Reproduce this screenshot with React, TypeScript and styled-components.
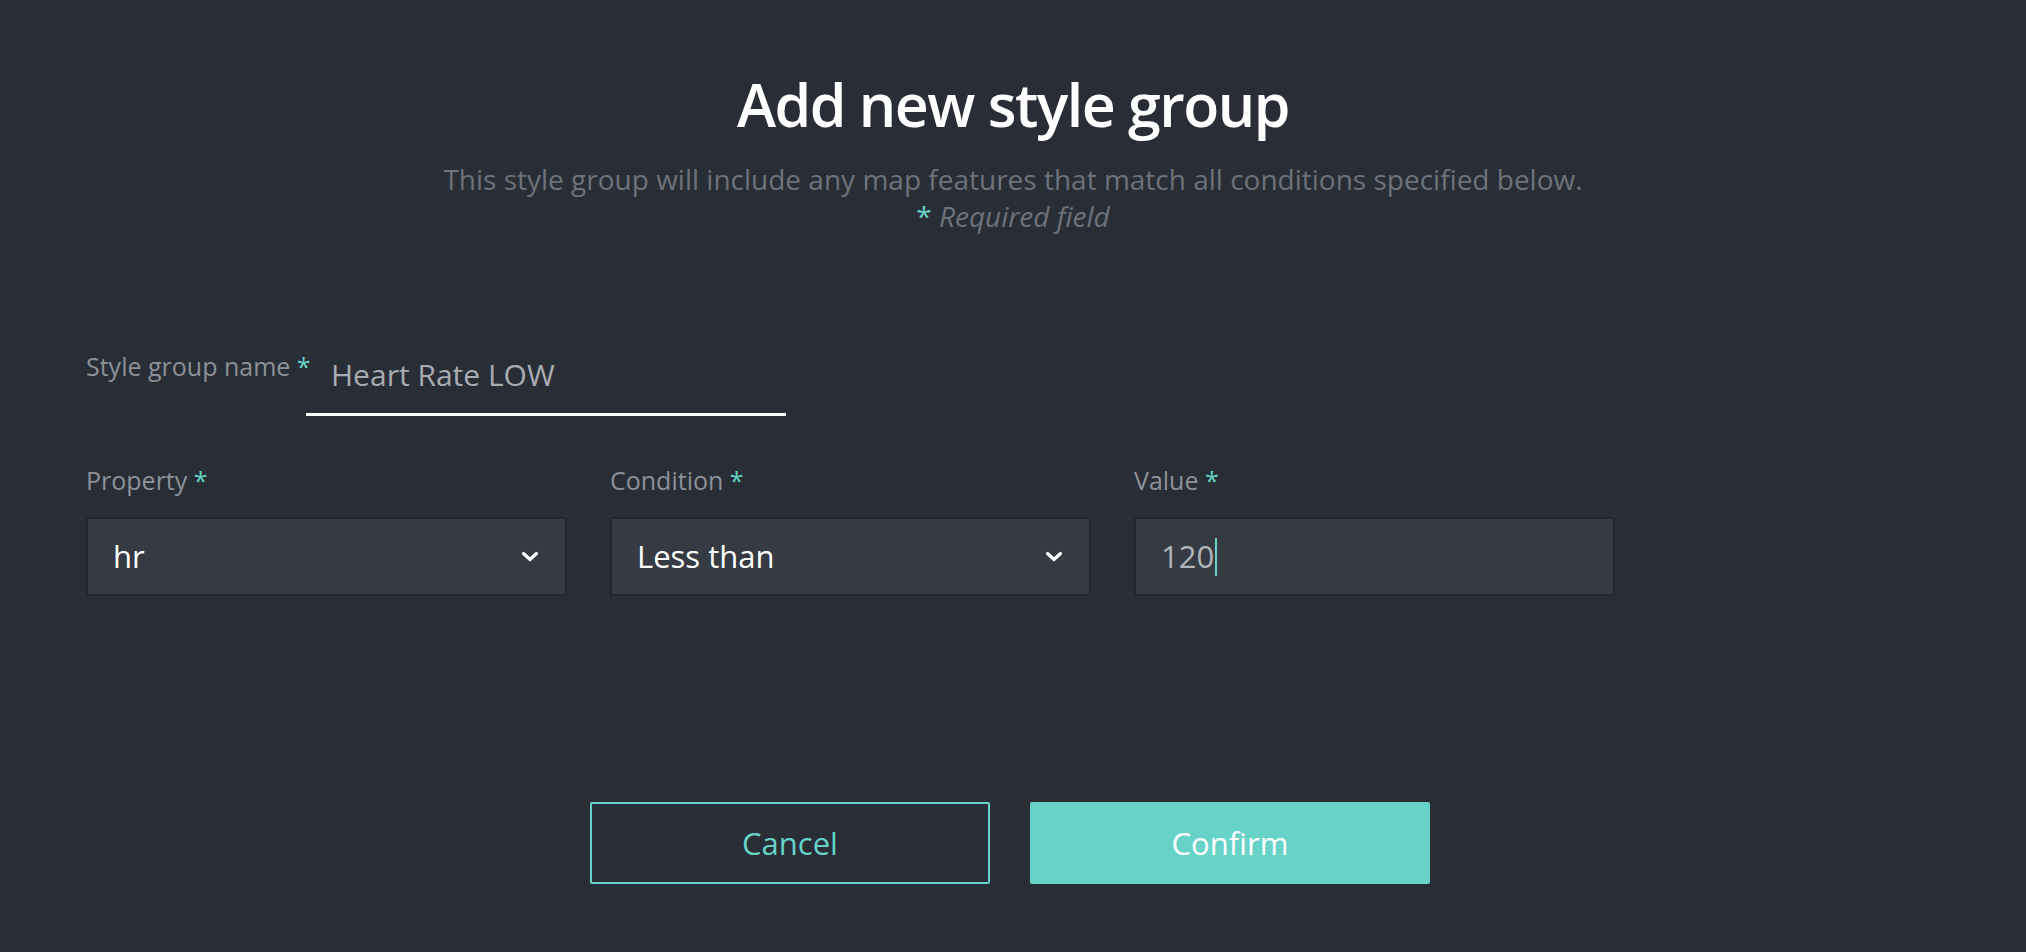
import React from 'react';
import styled, { createGlobalStyle } from 'styled-components';

const GlobalStyle = createGlobalStyle`
  html, body {
    margin: 0;
    padding: 0;
    background: #292d36;
  }
  body {
    font-family: "Open Sans", "Noto Sans", sans-serif;
  }
`;

const Page = styled.div`
  min-height: 100vh;
  box-sizing: border-box;
  padding-top: 75px;
  background: #292d36;
`;

const Header = styled.header`
  text-align: center;
`;

const Title = styled.h1`
  margin: 0;
  font-size: 59px;
  line-height: 1;
  font-weight: 600;
  color: #ffffff;
  letter-spacing: -1.5px;
`;

const Subtitle = styled.p`
  margin: 27px 0 0;
  font-size: 28px;
  line-height: 37px;
  color: #6e727b;
`;

const Required = styled.span`
  font-style: italic;
`;

const Star = styled.span`
  color: #67d3c8;
  font-style: normal;
`;

const Form = styled.div`
  padding: 0 86px;
  margin-top: 100px;
`;

const NameRow = styled.div`
  display: flex;
  align-items: flex-start;
`;

const Label = styled.label`
  font-size: 25px;
  line-height: 1;
  color: #8d9199;
  white-space: nowrap;
`;

const NameLabel = styled(Label)`
  flex: 0 0 220px;
  width: 220px;
  min-width: 0;
  margin-top: 19px;
`;

const NameInput = styled.input`
  flex: 0 0 480px;
  width: 480px;
  height: 81px;
  margin: 0;
  box-sizing: border-box;
  padding: 0 25px;
  border: none;
  border-bottom: 3px solid #ffffff;
  background: transparent;
  color: #a9acb2;
  font-family: inherit;
  font-size: 30px;
  outline: none;
`;

const FieldRow = styled.div`
  display: grid;
  grid-template-columns: repeat(3, 481px);
  column-gap: 43px;
  margin-top: 52px;
`;

const Field = styled.div`
  display: flex;
  flex-direction: column;
  gap: 24px;
`;

const Box = styled.div`
  height: 79px;
  box-sizing: border-box;
  display: flex;
  align-items: center;
  justify-content: space-between;
  padding: 0 26px 0 25px;
  background: #363a43;
  border: 2px solid #23262d;
  font-size: 31px;
  line-height: 1;
`;

const BoxText = styled.span<{ $muted?: boolean }>`
  color: ${(p) => (p.$muted ? '#b1b4b9' : '#ffffff')};
  display: flex;
  align-items: center;
`;

const Caret = styled.span`
  display: inline-block;
  width: 2px;
  height: 38px;
  margin-left: 1px;
  background: #67d3c8;
`;

const Buttons = styled.div`
  display: flex;
  justify-content: center;
  gap: 40px;
  margin-top: 206px;
  padding-right: 6px;
`;

const Button = styled.button<{ $primary?: boolean }>`
  width: 400px;
  height: 82px;
  box-sizing: border-box;
  border: 2px solid #67d3c8;
  border-radius: 2px;
  background: ${(p) => (p.$primary ? '#67d3c8' : 'transparent')};
  color: ${(p) => (p.$primary ? '#ffffff' : '#67d3c8')};
  font-family: inherit;
  font-size: 31px;
  cursor: pointer;
`;

function Chevron() {
  return (
    <svg width="18" height="11" viewBox="0 0 18 11">
      <polyline
        points="2.5,2.5 9,8.5 15.5,2.5"
        fill="none"
        stroke="#ffffff"
        strokeWidth="3.2"
        strokeLinecap="round"
        strokeLinejoin="round"
      />
    </svg>
  );
}

function App() {
  return (
    <Page>
      <GlobalStyle />
      <Header>
        <Title>Add new style group</Title>
        <Subtitle>
          This style group will include any map features that match all conditions specified below.
          <br />
          <Required>
            <Star>*</Star> Required field
          </Required>
        </Subtitle>
      </Header>

      <Form>
        <NameRow>
          <NameLabel>
            Style group name <Star>*</Star>
          </NameLabel>
          <NameInput defaultValue="Heart Rate LOW" />
        </NameRow>

        <FieldRow>
          <Field>
            <Label>
              Property <Star>*</Star>
            </Label>
            <Box>
              <BoxText>hr</BoxText>
              <Chevron />
            </Box>
          </Field>
          <Field>
            <Label>
              Condition <Star>*</Star>
            </Label>
            <Box>
              <BoxText>Less than</BoxText>
              <Chevron />
            </Box>
          </Field>
          <Field>
            <Label>
              Value <Star>*</Star>
            </Label>
            <Box>
              <BoxText $muted>
                120
                <Caret />
              </BoxText>
            </Box>
          </Field>
        </FieldRow>
      </Form>

      <Buttons>
        <Button>Cancel</Button>
        <Button $primary>Confirm</Button>
      </Buttons>
    </Page>
  );
}

export default App;
